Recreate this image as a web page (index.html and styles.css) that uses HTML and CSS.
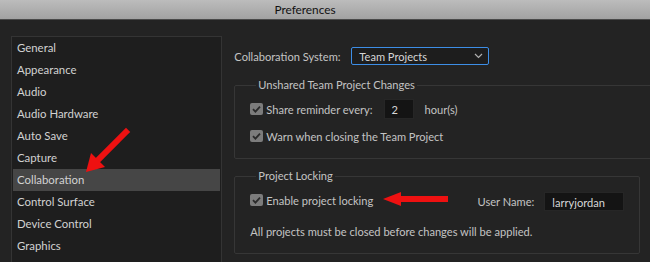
FILE: index.html
```html
<!DOCTYPE html>
<html lang="en">
<head>
  <meta charset="UTF-8">
  <title>Preferences</title>
  <link rel="stylesheet" href="styles.css">
</head>
<body>
  <div class="titlebar">Preferences</div>
  <div class="window">
    <div class="sidebar">
      <div class="nav-item">General</div>
      <div class="nav-item">Appearance</div>
      <div class="nav-item">Audio</div>
      <div class="nav-item">Audio Hardware</div>
      <div class="nav-item">Auto Save</div>
      <div class="nav-item">Capture</div>
      <div class="nav-item active">Collaboration</div>
      <div class="nav-item">Control Surface</div>
      <div class="nav-item">Device Control</div>
      <div class="nav-item">Graphics</div>
    </div>
    <div class="content">
      <div class="system-row">
        <span class="system-label">Collaboration System:</span>
        <div class="select">
          <span>Team Projects</span>
          <svg class="chevron" width="9" height="6" viewBox="0 0 9 6"><path d="M1 1 L4.5 4.5 L8 1" fill="none" stroke="#b0b0b0" stroke-width="1.2"/></svg>
        </div>
      </div>
      <fieldset class="group group-wide">
        <legend>Unshared Team Project Changes</legend>
        <div class="row">
          <span class="check"><svg width="13" height="12" viewBox="0 0 13 12"><path d="M3 6.2 L5.4 8.6 L10 3.6" fill="none" stroke="#2a2a2a" stroke-width="1.8"/></svg></span>
          <span>Share reminder every:</span>
          <span class="num-input">2</span>
          <span>hour(s)</span>
        </div>
        <div class="row">
          <span class="check"><svg width="13" height="12" viewBox="0 0 13 12"><path d="M3 6.2 L5.4 8.6 L10 3.6" fill="none" stroke="#2a2a2a" stroke-width="1.8"/></svg></span>
          <span>Warn when closing the Team Project</span>
        </div>
      </fieldset>
      <fieldset class="group group-lock">
        <legend>Project Locking</legend>
        <div class="row">
          <span class="check"><svg width="13" height="12" viewBox="0 0 13 12"><path d="M3 6.2 L5.4 8.6 L10 3.6" fill="none" stroke="#2a2a2a" stroke-width="1.8"/></svg></span>
          <span>Enable project locking</span>
          <span class="user">
            <span>User Name:</span>
            <span class="text-input">larryjordan</span>
          </span>
        </div>
        <p class="note">All projects must be closed before changes will be applied.</p>
      </fieldset>
    </div>
  </div>
  <svg class="arrows" width="650" height="262" viewBox="0 0 650 262">
    <path d="M126 132 L97 161" stroke="#ee1111" stroke-width="6" stroke-linecap="square"/>
    <path d="M86 172 L91 153 L105 167 Z" fill="#ee1111"/>
    <path d="M400 199 L448 199" stroke="#ee1111" stroke-width="6"/>
    <path d="M383 199 L401 192 L401 206 Z" fill="#ee1111"/>
  </svg>
</body>
</html>
```

FILE: styles.css
```css
html, body {
  margin: 0;
  padding: 0;
  overflow: hidden;
}
body {
  background: #232323;
  font-family: Lato, 'Open Sans', Arial, sans-serif;
  font-size: 11.1px;
  color: #c4c4c4;
  width: 650px;
  height: 262px;
  position: relative;
}
.titlebar {
  height: 19px;
  line-height: 19px;
  background: linear-gradient(#bcbcbc, #a2a2a2);
  border-bottom: 1px solid #4a4a4a;
  color: #111;
  font-size: 11.8px;
  text-align: center;
  padding-right: 40px;
}
.window {
  display: flex;
  align-items: flex-start;
}
.sidebar {
  margin: 16px 0 0 11px;
  width: 208px;
  height: 226px;
  background: #1e1e1e;
  border: 1px solid #343434;
  border-bottom: none;
  padding: 0 1px;
}
.nav-item {
  height: 22px;
  line-height: 22px;
  padding-left: 4px;
  font-size: 11.4px;
  color: #d2d2d2;
}
.nav-item.active {
  background: #464646;
}
.content {
  margin-left: 12px;
  padding-top: 27px;
  width: 417px;
  overflow: hidden;
}
.system-row {
  display: flex;
  align-items: center;
  height: 18px;
}
.system-label {
  width: 117px;
}
.select {
  width: 124px;
  height: 16px;
  border: 1px solid #3d8ee6;
  border-radius: 2px;
  background: #1d1d1d;
  display: flex;
  align-items: center;
  justify-content: space-between;
  padding: 0 5px 0 7px;
  color: #d6d6d6;
}
.group {
  margin: 12px 0 0 0;
  border: 1px solid #363636;
  border-radius: 2px;
  padding: 6px 15px 12px 15px;
  min-width: 0;
}
.group legend {
  line-height: 16px;
  padding: 0 2px;
  margin-left: 6px;
  color: #c4c4c4;
}
.group-wide {
  width: 440px;
}
.group-lock {
  margin-top: 9px;
  width: 374px;
  padding-bottom: 13px;
}
.row {
  display: flex;
  align-items: center;
  height: 20px;
  gap: 3px;
}
.row + .row {
  margin-top: 7px;
}
.check {
  width: 13px;
  height: 12px;
  background: #7c7c7c;
  border-radius: 2px;
  display: inline-flex;
}
.num-input {
  width: 30px;
  height: 20px;
  line-height: 20px;
  background: #141414;
  border: 1px solid #262626;
  box-sizing: border-box;
  padding-left: 7px;
  margin: 0 8px 0 8px;
  color: #d6d6d6;
}
.user {
  margin-left: auto;
  display: flex;
  align-items: center;
  gap: 10px;
  padding-top: 2px;
}
.text-input {
  width: 80px;
  height: 19px;
  line-height: 19px;
  background: #141414;
  border: 1px solid #262626;
  box-sizing: border-box;
  padding-left: 7px;
  color: #d6d6d6;
}
.note {
  margin: 14px 0 0 0;
  line-height: 16px;
}
.arrows {
  position: absolute;
  left: 0;
  top: 0;
  pointer-events: none;
}
```
